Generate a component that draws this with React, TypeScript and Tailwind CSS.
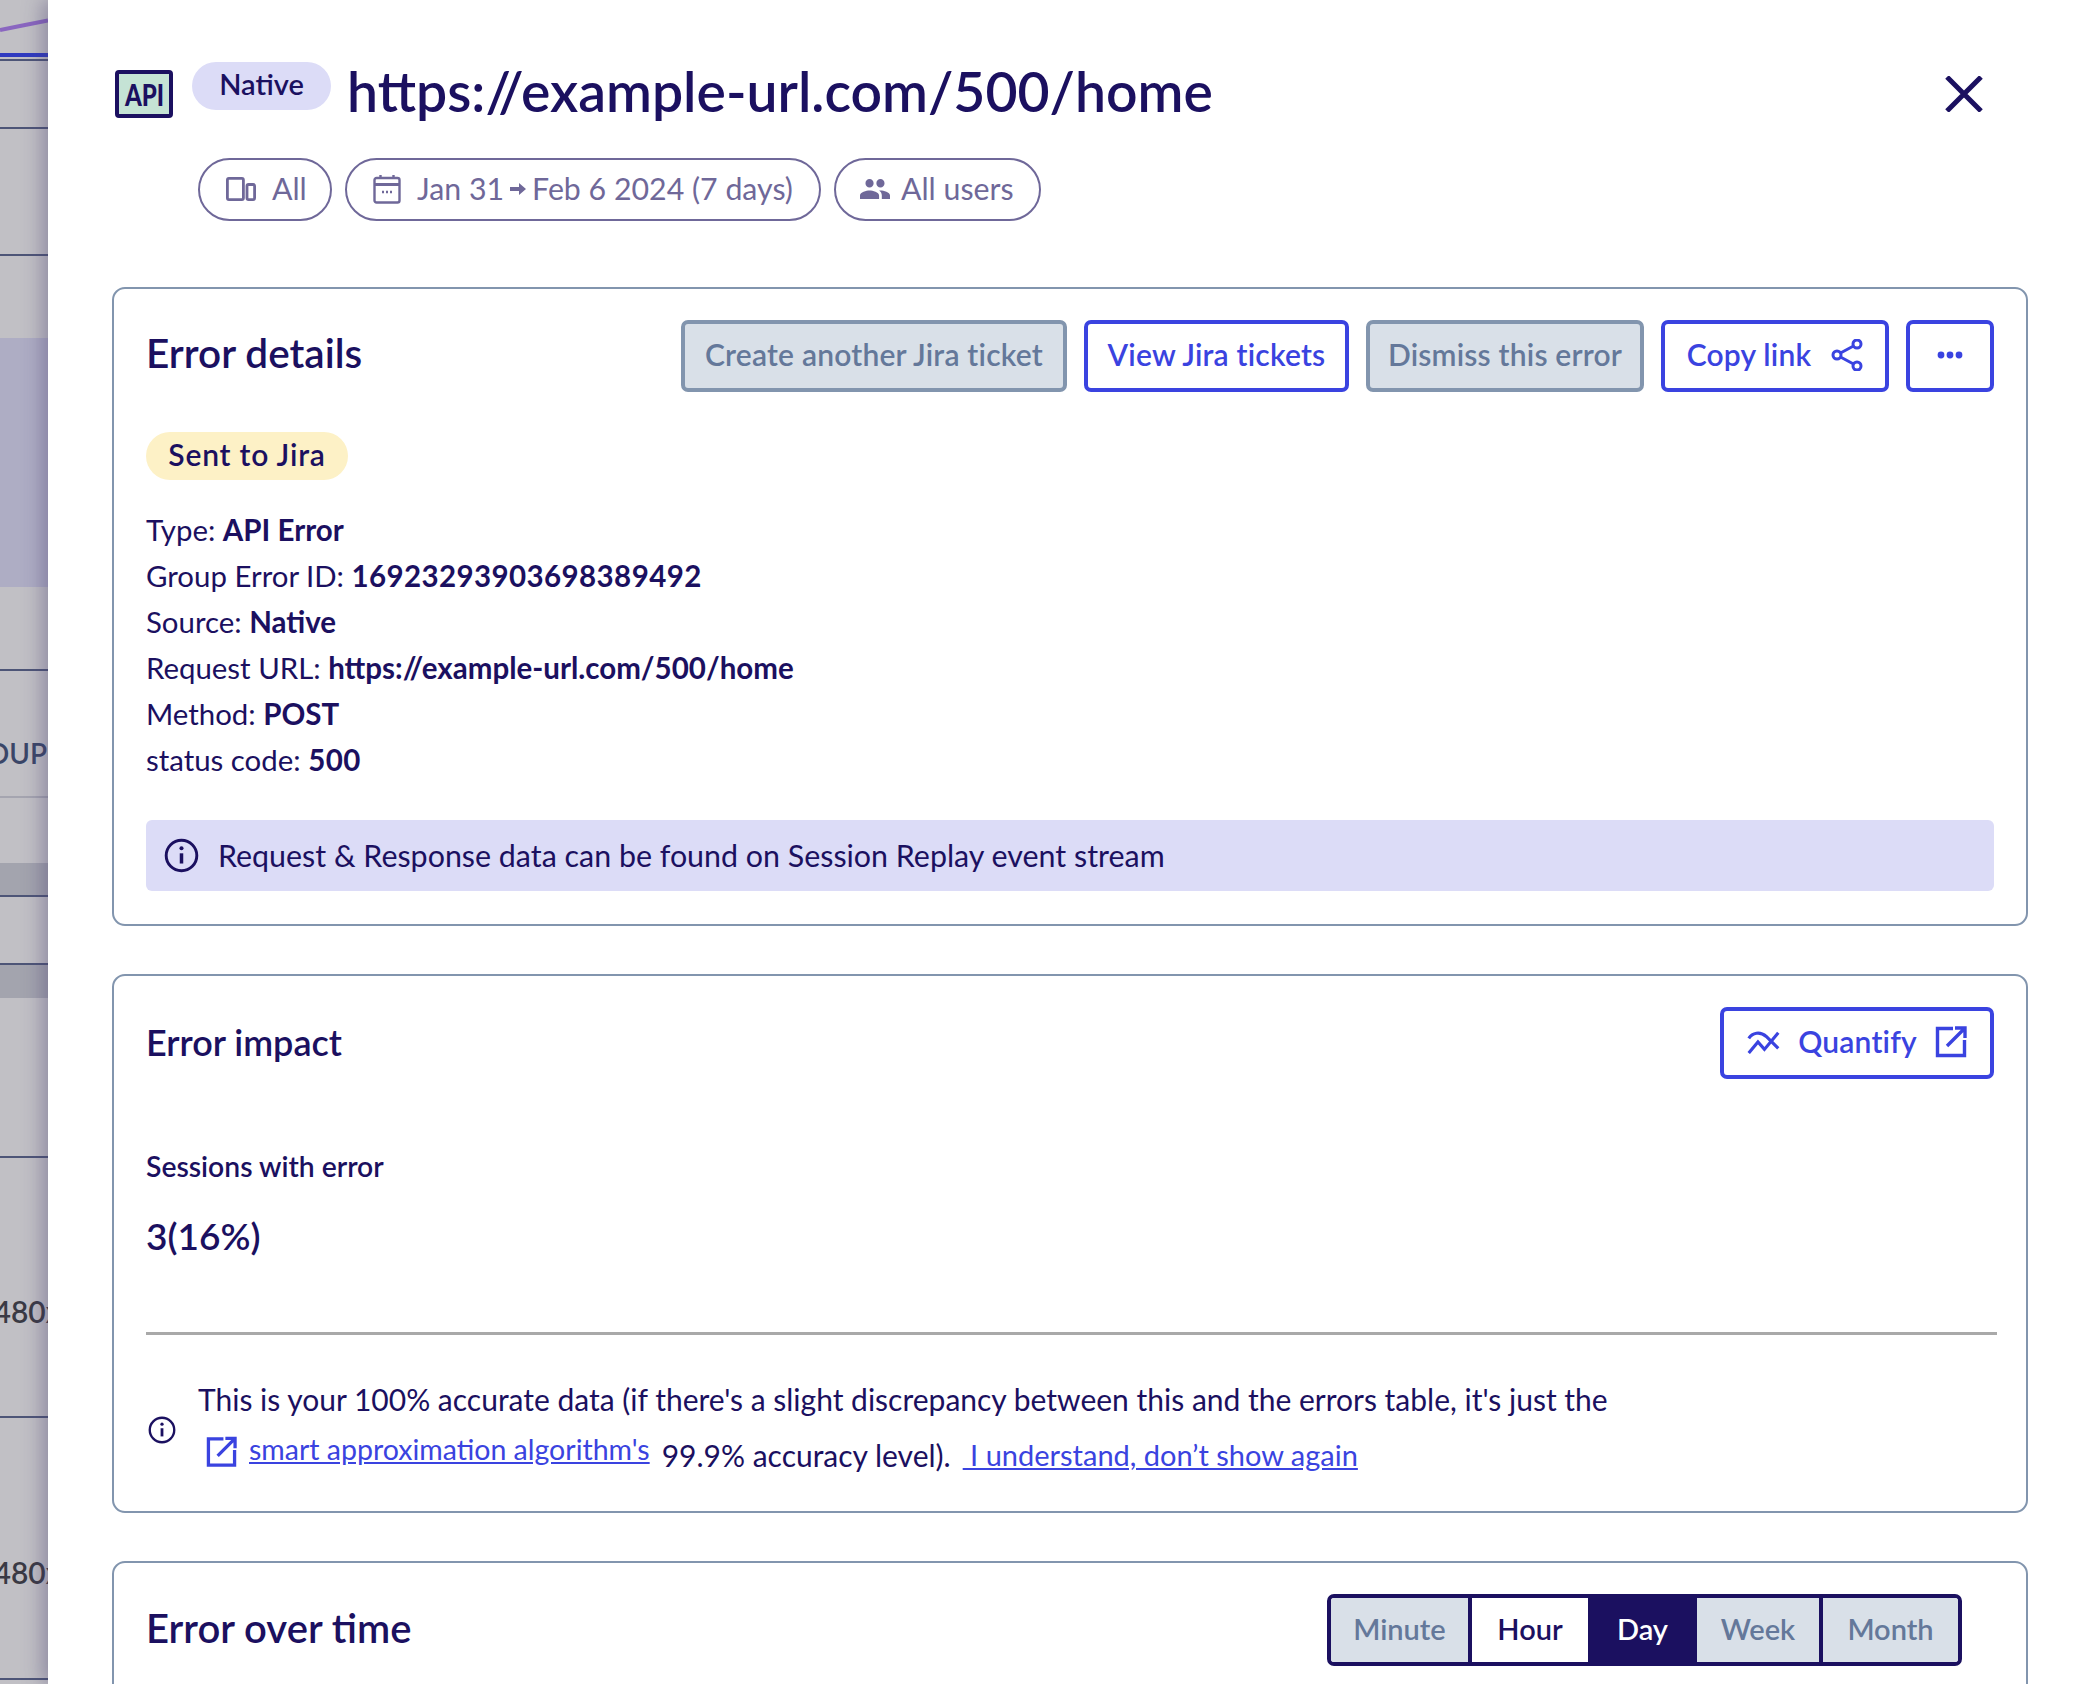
import React from "react";

const Info = ({ className }: { className: string }) => (
  <svg viewBox="0 0 24 24" className={className} fill="none" stroke="currentColor" strokeWidth="2">
    <circle cx="12" cy="12" r="10.5" />
    <path d="M12 10.5V17.5" strokeWidth="2.4" />
    <circle cx="12" cy="7" r="1.4" fill="currentColor" stroke="none" />
  </svg>
);

const External = ({ className }: { className: string }) => (
  <svg viewBox="0 0 32 32" className={className} fill="none" stroke="currentColor" strokeWidth="3.4">
    <path d="M18 2.5H2.5V29.5H29.5V14" />
    <path d="M12 20L29 3M20 2H30V12" />
  </svg>
);

const Btn = ({ children, gray, className }: { children: React.ReactNode; gray?: boolean; className: string }) => (
  <div
    className={`flex h-[72px] items-center justify-center rounded-[7px] border-4 pb-[3px] text-[30px] font-semibold tracking-[0.2px] ${
      gray ? "border-[#8295ae] bg-[#d9e0e8] text-[#64789a]" : "border-[#3a43e0] bg-white text-[#3a43e0]"
    } ${className}`}
  >
    {children}
  </div>
);

const Pill = ({ children, className }: { children: React.ReactNode; className: string }) => (
  <div className={`flex h-[63px] items-center rounded-full border-2 border-[#6f6899] pb-[2px] text-[30.3px] text-[#6f6899] ${className}`}>
    {children}
  </div>
);

const Line = ({ label, value, wide }: { label: string; value: string; wide?: boolean }) => (
  <div className="h-[46px] text-[29.4px] leading-[45px]">
    {label} <span className={`text-[29.5px] font-bold ${wide ? "tracking-[0.4px]" : ""}`}>{value}</span>
  </div>
);

const Strip = () => (
  <div className="flex h-full w-[48px] shrink-0 flex-col overflow-hidden bg-[#c1c0c5]">
    <div className="h-[53px] shrink-0">
      <svg viewBox="0 0 48 53" className="h-[53px] w-[48px]" fill="none">
        <path d="M0 30L20 26L48 20.5" stroke="#8a66c0" strokeWidth="4" />
      </svg>
    </div>
    <div className="h-[4px] shrink-0 bg-[#2f3ac0]" />
    <div className="h-[2px] shrink-0 bg-[#c1c0c5]" />
    <div className="h-[2px] shrink-0 bg-[#4d5577]" />
    <div className="h-[68px] shrink-0 border-b-2 border-[#4d5577]" />
    <div className="h-[127px] shrink-0 border-b-2 border-[#4d5577]" />
    <div className="h-[82px] shrink-0" />
    <div className="h-[249px] shrink-0 bg-[#aeadc4]" />
    <div className="h-[84px] shrink-0 border-b-2 border-[#4d5577]" />
    <div className="flex h-[127px] shrink-0 items-center justify-end overflow-hidden border-b-2 border-[#a5a5b0] pt-[38px] pr-[1px] text-[28px] leading-none font-semibold whitespace-nowrap text-[#3a4668]">
      OUP
    </div>
    <div className="h-[65px] shrink-0" />
    <div className="h-[34px] shrink-0 border-b-2 border-[#4d5577] bg-[#a3a4ae]" />
    <div className="h-[68px] shrink-0 border-b-2 border-[#4d5577]" />
    <div className="h-[33px] shrink-0 bg-[#a3a4ae]" />
    <div className="h-[160px] shrink-0 border-b-2 border-[#4d5577]" />
    <div className="flex h-[260px] shrink-0 items-center justify-end overflow-hidden border-b-2 border-[#4d5577] pt-[47px] text-[30px] leading-none font-semibold whitespace-nowrap text-[#3a3a44]">
      <span className="mr-[-13px] shrink-0">480x</span>
    </div>
    <div className="flex h-[262px] shrink-0 items-center justify-end overflow-hidden border-b-2 border-[#4d5577] pt-[47px] text-[30px] leading-none font-semibold whitespace-nowrap text-[#3a3a44]">
      <span className="mr-[-13px] shrink-0">480x</span>
    </div>
  </div>
);

export default function App() {
  return (
    <div className="flex h-[1684px] w-[2086px] overflow-hidden bg-white font-['Lato',sans-serif] text-[#1b1060]">
      <Strip />
      <div className="relative z-10 flex min-w-0 flex-1 flex-col bg-white pr-[58px] pl-[64px] shadow-[-6px_0_18px_rgba(70,60,110,0.4)]">
        {/* header */}
        <div className="flex h-[158px] shrink-0 items-start">
          <div className="mt-[70px] ml-[3px] flex h-[48px] w-[58px] items-center justify-center overflow-hidden rounded-[4px] border-[4px] border-[#1b1060] bg-[#c5e3d5] text-[30px] leading-none font-black">
            <span className="inline-block scale-x-[0.8]">API</span>
          </div>
          <div className="mt-[62px] ml-[19px] flex h-[48px] w-[139px] items-center justify-center rounded-full bg-[#dcdcf7] pb-[4px] text-[29px] font-semibold">
            Native
          </div>
          <div className="mt-[51px] ml-[16px] text-[55.3px] leading-[80px] font-semibold whitespace-nowrap">
            https://example-url.com/500/home
          </div>
          <div className="mt-[76px] mr-[45px] ml-auto">
            <svg viewBox="0 0 38 36" className="h-[36px] w-[38px]" fill="none" stroke="currentColor" strokeWidth="5">
              <path d="M2 1L36 35M36 1L2 35" />
            </svg>
          </div>
        </div>
        <div className="flex h-[63px] shrink-0 gap-[13px] pl-[86px]">
          <Pill className="w-[134px] gap-[16px] pl-[26px]">
            <svg viewBox="0 0 30 24" className="h-[24px] w-[30px]" fill="none" stroke="currentColor" strokeWidth="2.8">
              <rect x="1.4" y="1.4" width="16" height="21.2" rx="1.5" />
              <rect x="21" y="7.5" width="7.6" height="15.1" rx="1.5" />
            </svg>
            All
          </Pill>
          <Pill className="w-[476px] gap-[16px] pl-[26px]">
            <svg viewBox="0 0 28 30" className="h-[30px] w-[28px]" fill="none" stroke="currentColor" strokeWidth="2.4">
              <rect x="1.5" y="4" width="25" height="24.5" rx="2" />
              <path d="M1.5 10.5H26.5" strokeWidth="3" />
              <path d="M7.5 1V5M20.5 1V5" />
              <path d="M9 18H11M13 18H15M17 18H19" strokeWidth="2.4" />
            </svg>
            <span className="flex items-center gap-[6px] whitespace-nowrap">
              Jan 31
              <svg viewBox="0 0 16 12" className="h-[12px] w-[16px]" fill="currentColor">
                <path d="M0 4H9V0L16 6L9 12V8H0Z" />
              </svg>
              Feb 6 2024 (7 days)
            </span>
          </Pill>
          <Pill className="w-[207px] gap-[11px] pl-[24px]">
            <svg viewBox="1 5 22 14" className="h-[20px] w-[30px]" fill="currentColor" preserveAspectRatio="none">
              <path d="M16 11c1.66 0 2.99-1.34 2.99-3S17.66 5 16 5c-1.66 0-3 1.34-3 3s1.34 3 3 3zm-8 0c1.66 0 2.99-1.34 2.99-3S9.66 5 8 5C6.34 5 5 6.34 5 8s1.34 3 3 3zm0 2c-2.33 0-7 1.17-7 3.5V19h14v-2.5c0-2.33-4.67-3.5-7-3.5zm8 0c-.29 0-.62.02-.97.05 1.16.84 1.97 1.97 1.97 3.45V19h6v-2.5c0-2.33-4.67-3.5-7-3.5z" />
            </svg>
            All users
          </Pill>
        </div>

        {/* Error details */}
        <div className="mt-[66px] flex h-[639px] shrink-0 flex-col rounded-[13px] border-2 border-[#8295ae] px-[32px]">
          <div className="mt-[31px] flex items-center justify-between">
            <div className="pb-[5px] text-[40.5px] font-semibold">Error details</div>
            <div className="flex gap-[17px]">
              <Btn gray className="w-[386px]">Create another Jira ticket</Btn>
              <Btn className="w-[265px]">View Jira tickets</Btn>
              <Btn gray className="w-[278px]">Dismiss this error</Btn>
              <Btn className="w-[228px] gap-[20px]">
                Copy link
                <svg viewBox="0 0 32 32" className="h-[32px] w-[32px]" fill="none" stroke="currentColor" strokeWidth="3">
                  <circle cx="6" cy="16" r="4" />
                  <circle cx="26" cy="5" r="4" />
                  <circle cx="26" cy="27" r="4" />
                  <path d="M9.5 14L22.5 7M9.5 18L22.5 25" />
                </svg>
              </Btn>
              <Btn className="w-[88px]">
                <svg viewBox="0 0 26 8" className="h-[8px] w-[26px]" fill="currentColor">
                  <circle cx="4" cy="4" r="3.4" />
                  <circle cx="13" cy="4" r="3.4" />
                  <circle cx="22" cy="4" r="3.4" />
                </svg>
              </Btn>
            </div>
          </div>
          <div className="mt-[40px] flex h-[48px] w-[202px] items-center justify-center rounded-full bg-[#fdf1c6] pb-[4px] text-[30px] font-semibold tracking-[0.8px]">
            Sent to Jira
          </div>
          <div className="mt-[27px]">
            <Line label="Type:" value="API Error" />
            <Line label="Group Error ID:" value="16923293903698389492" wide />
            <Line label="Source:" value="Native" />
            <Line label="Request URL:" value="https://example-url.com/500/home" />
            <Line label="Method:" value="POST" />
            <Line label="status code:" value="500" wide />
          </div>
          <div className="mt-[37px] flex h-[71px] items-center gap-[19px] rounded-[6px] bg-[#dcdcf7] pl-[18px] text-[30.4px]">
            <Info className="h-[35px] w-[35px]" />
            Request &amp; Response data can be found on Session Replay event stream
          </div>
        </div>

        {/* Error impact */}
        <div className="mt-[48px] flex h-[539px] shrink-0 flex-col rounded-[13px] border-2 border-[#8295ae] px-[32px]">
          <div className="mt-[31px] flex items-center justify-between">
            <div className="pb-[2px] text-[36px] font-semibold">Error impact</div>
            <Btn className="w-[274px] gap-[18px]">
              <svg viewBox="0 0 34 26" className="h-[24px] w-[33px]" fill="none" stroke="currentColor" strokeWidth="3.4">
                <path d="M1 9C5 3 13 1 20 7L33 20" />
                <path d="M1 25L11 13L18 21L33 3" />
              </svg>
              Quantify
              <External className="h-[32px] w-[32px]" />
            </Btn>
          </div>
          <div className="mt-[69px] text-[28.3px] leading-[36px] font-semibold">Sessions with error</div>
          <div className="mt-[27px] text-[37px] leading-[50px] font-semibold">3(16%)</div>
          <div className="mt-[71px] mr-[-3px] h-[3px] bg-[#a9a9a9]" />
          <div className="mt-[41px] flex items-center">
            <Info className="mt-[6px] ml-[2px] h-[28px] w-[28px] shrink-0" />
            <div className="ml-[22px] flex flex-col text-[30px]">
              <div className="h-[48px] leading-[46px] whitespace-nowrap">
                This is your 100% accurate data (if there's a slight discrepancy between this and the errors table, it's just the
              </div>
              <div className="flex h-[53px] items-end whitespace-nowrap">
                <span className="mb-[4px] ml-[8px] flex items-center gap-[12px] text-[#3a43e0]">
                  <External className="h-[32px] w-[31px]" />
                  <span className="mb-[6px] text-[28.5px] leading-[36px] underline">smart approximation algorithm's</span>
                </span>
                <span className="ml-[12px] leading-[44px]">99.9% accuracy level).</span>
                <span className="ml-[12px] text-[29px] leading-[44px] whitespace-pre text-[#3a43e0] underline"> I understand, don’t show again</span>
              </div>
            </div>
          </div>
        </div>

        {/* Error over time */}
        <div className="mt-[48px] flex h-[200px] shrink-0 flex-col rounded-[13px] border-2 border-[#8295ae] pr-[64px] pl-[32px]">
          <div className="mt-[31px] flex items-center justify-between">
            <div className="pb-[4px] text-[40px] font-semibold">Error over time</div>
            <div className="flex h-[72px] w-[635px] overflow-hidden rounded-[7px] border-4 border-[#1b1060] text-[29px] font-semibold">
              <div className="flex w-[141px] items-center justify-center border-r-4 border-[#1b1060] bg-[#d9e0e8] pb-[3px] text-[#64789a]">Minute</div>
              <div className="flex w-[116px] items-center justify-center bg-white pb-[3px]">Hour</div>
              <div className="flex w-[109px] items-center justify-center bg-[#1b1060] pb-[3px] text-white">Day</div>
              <div className="flex w-[126px] items-center justify-center border-r-4 border-[#1b1060] bg-[#d9e0e8] pb-[3px] text-[#64789a]">Week</div>
              <div className="flex flex-1 items-center justify-center bg-[#d9e0e8] pb-[3px] text-[#64789a]">Month</div>
            </div>
          </div>
        </div>
      </div>
    </div>
  );
}
